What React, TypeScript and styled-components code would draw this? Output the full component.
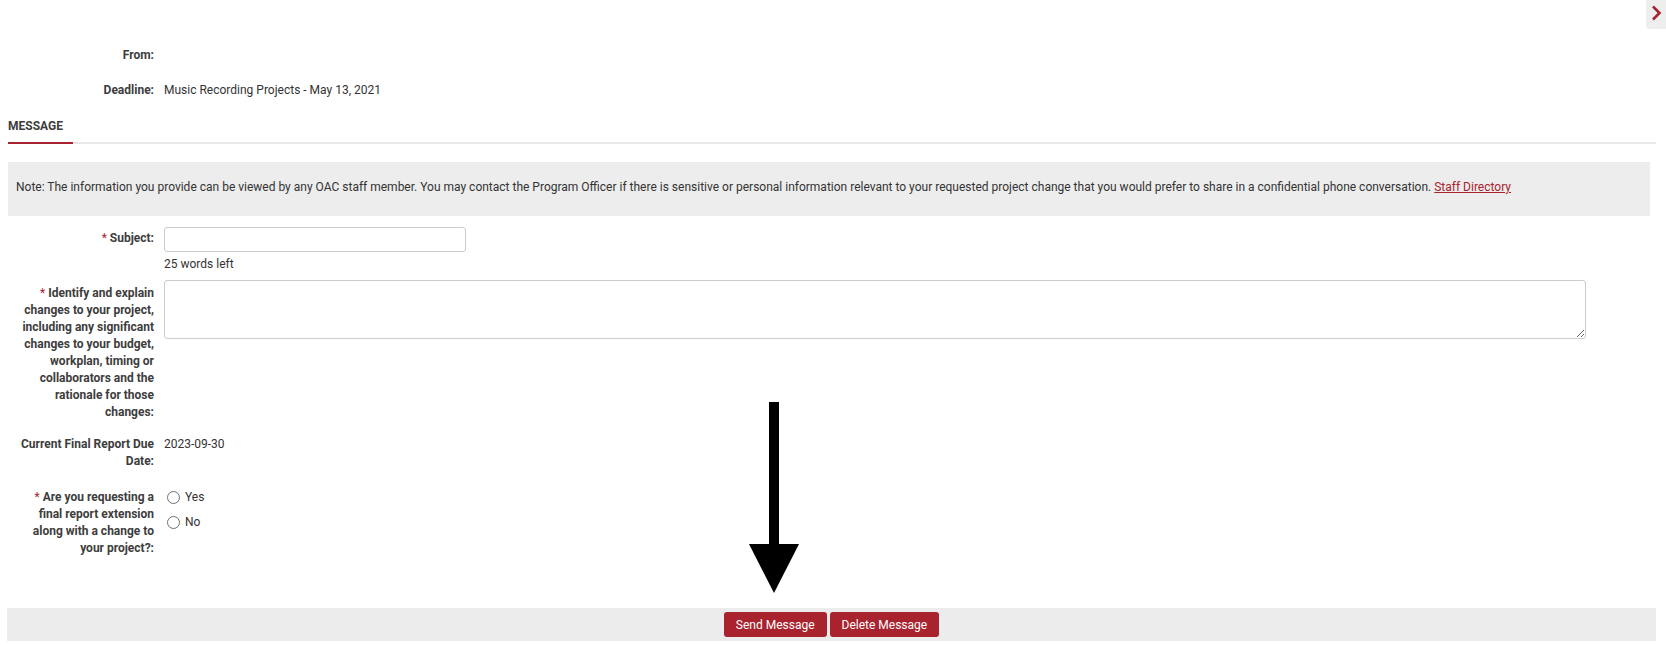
import styled, { createGlobalStyle } from "styled-components";

const GlobalStyle = createGlobalStyle`
  body {
    margin: 0;
    background: #fff;
    font-family: Roboto, "Liberation Sans", Arial, sans-serif;
    font-size: 12px;
    line-height: 17px;
    color: #333;
  }
`;

const RED = "#a8232e";

function App() {
  return (
    <>
      <GlobalStyle />
      <Page>
        <CollapseTab>
          <svg width="12" height="18" viewBox="0 0 12 18">
            <path d="M3 2.5 L9.5 9 L3 15.5" fill="none" stroke={RED} strokeWidth="2.6" />
          </svg>
        </CollapseTab>

        <Header>
          <InfoRow>
            <Label>From:</Label>
            <Value />
          </InfoRow>
          <InfoRow>
            <Label>Deadline:</Label>
            <Value>Music Recording Projects - May 13, 2021</Value>
          </InfoRow>
        </Header>

        <TabBar>
          <Tab>MESSAGE</Tab>
        </TabBar>

        <Note>
          Note: The information you provide can be viewed by any OAC staff member. You may contact the
          Program Officer if there is sensitive or personal information relevant to your requested project
          change that you would prefer to share in a confidential phone conversation.{" "}
          <NoteLink href="#">Staff Directory</NoteLink>
        </Note>

        <Form>
          <FieldRow $mt={11}>
            <Label $pt={3}>
              <Req>* </Req>Subject:
            </Label>
            <div>
              <TextInput type="text" />
              <Hint>25 words left</Hint>
            </div>
          </FieldRow>

          <FieldRow $mt={7}>
            <Label $pt={5}>
              <Req>* </Req>Identify and explain changes to your project, including any significant changes to
              your budget, workplan, timing or collaborators and the rationale for those changes:
            </Label>
            <div>
              <TextArea />
            </div>
          </FieldRow>

          <FieldRow $mt={12}>
            <Label $pt={3}>Current Final Report Due Date:</Label>
            <Value $pt={3}>2023-09-30</Value>
          </FieldRow>

          <FieldRow $mt={16}>
            <Label $pt={3}>
              <Req>* </Req>Are you requesting a final report extension along with a change to your project?:
            </Label>
            <RadioGroup>
              <RadioOption>
                <Radio type="radio" name="ext" />
                Yes
              </RadioOption>
              <RadioOption>
                <Radio type="radio" name="ext" />
                No
              </RadioOption>
            </RadioGroup>
          </FieldRow>
        </Form>

        <Footer>
          <ActionButton>Send Message</ActionButton>
          <ActionButton>Delete Message</ActionButton>
        </Footer>

        <Pointer width="50" height="191" viewBox="0 0 50 191">
          <rect x="20" y="0" width="10" height="143" fill="#000" />
          <polygon points="0,142 50,142 25,191" fill="#000" />
        </Pointer>
      </Page>
    </>
  );
}

const Page = styled.div`
  position: relative;
  width: 1666px;
  height: 646px;
  box-sizing: border-box;
  padding: 0 10px 0 8px;
  overflow: hidden;
`;

const CollapseTab = styled.div`
  position: absolute;
  top: 0;
  right: 0;
  width: 20px;
  height: 29px;
  background: #eeeeee;
  border-bottom-left-radius: 4px;
  display: flex;
  justify-content: center;
  padding-top: 4px;
  box-sizing: border-box;
`;

const Header = styled.div`
  padding-top: 38px;
`;

const InfoRow = styled.div`
  display: grid;
  grid-template-columns: 146px 1fr;
  column-gap: 10px;
  padding: 9px 0;
  min-height: 17px;
`;

const Label = styled.div<{ $pt?: number }>`
  text-align: right;
  font-weight: 700;
  color: #3d3d3d;
  padding-top: ${(p) => p.$pt ?? 0}px;
`;

const Value = styled.div<{ $pt?: number }>`
  color: #333;
  padding-top: ${(p) => p.$pt ?? 0}px;
`;

const Req = styled.span`
  color: ${RED};
  font-weight: 400;
`;

const TabBar = styled.div`
  margin-top: 10px;
  border-bottom: 2px solid #e8e8e8;
  display: flex;
`;

const Tab = styled.div`
  font-weight: 700;
  color: #3d3d3d;
  padding: 0 10px 7px 0;
  margin-bottom: -2px;
  border-bottom: 2px solid ${RED};
`;

const Note = styled.div`
  margin-top: 18px;
  margin-right: 6px;
  background: #ededed;
  padding: 17px 8px 20px;
  color: #333;
`;

const NoteLink = styled.a`
  color: ${RED};
  text-decoration: underline;
`;

const Form = styled.div`
  display: flex;
  flex-direction: column;
`;

const FieldRow = styled.div<{ $mt: number }>`
  display: grid;
  grid-template-columns: 146px 1fr;
  column-gap: 10px;
  margin-top: ${(p) => p.$mt}px;
  align-items: start;
`;

const TextInput = styled.input`
  display: block;
  width: 302px;
  height: 25px;
  box-sizing: border-box;
  border: 1px solid #cccccc;
  border-radius: 3px;
  font: inherit;
  padding: 0 6px;
  margin: 0;
`;

const Hint = styled.div`
  margin-top: 4px;
  color: #333;
`;

const TextArea = styled.textarea`
  display: block;
  width: 1422px;
  height: 59px;
  box-sizing: border-box;
  border: 1px solid #cccccc;
  border-radius: 3px;
  font: inherit;
  padding: 4px 6px;
  margin: 0;
`;

const RadioGroup = styled.div`
  display: flex;
  flex-direction: column;
  gap: 8px;
  padding-top: 3px;
`;

const RadioOption = styled.label`
  display: flex;
  align-items: center;
  gap: 5px;
  height: 17px;
  color: #333;
`;

const Radio = styled.input`
  appearance: none;
  width: 13px;
  height: 13px;
  margin: 0 0 0 3px;
  border: 1px solid #6f6f6f;
  border-radius: 50%;
  background: #fff;
  box-sizing: border-box;
`;

const Footer = styled.div`
  position: absolute;
  left: 7px;
  right: 10px;
  top: 608px;
  height: 33px;
  background: #ececec;
  display: flex;
  justify-content: center;
  align-items: center;
  gap: 3px;
`;

const ActionButton = styled.button`
  height: 25px;
  padding: 0 12px;
  background: ${RED};
  color: #fff;
  border: none;
  border-radius: 3px;
  font-family: Roboto, "Liberation Sans", Arial, sans-serif;
  font-size: 12px;
  cursor: pointer;
`;

const Pointer = styled.svg`
  position: absolute;
  left: 749px;
  top: 402px;
`;

export default App;
